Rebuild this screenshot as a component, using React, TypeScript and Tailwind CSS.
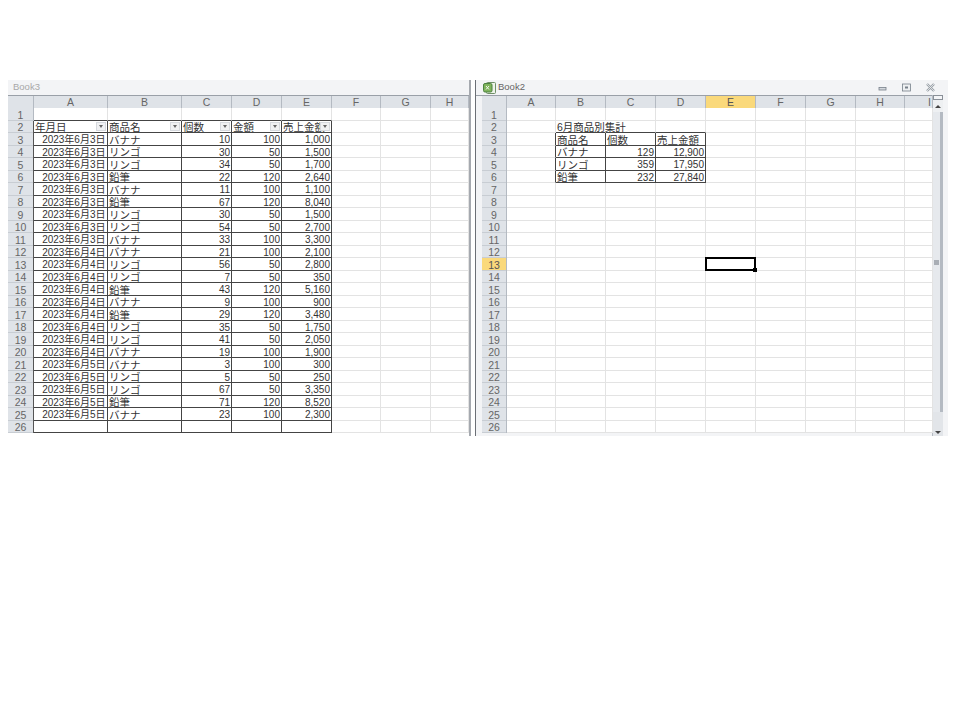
import React from "react";

const rowsLeft: [string, string, string, string, string][] = [
  ["2023年6月3日", "バナナ", "10", "100", "1,000"],
  ["2023年6月3日", "リンゴ", "30", "50", "1,500"],
  ["2023年6月3日", "リンゴ", "34", "50", "1,700"],
  ["2023年6月3日", "鉛筆", "22", "120", "2,640"],
  ["2023年6月3日", "バナナ", "11", "100", "1,100"],
  ["2023年6月3日", "鉛筆", "67", "120", "8,040"],
  ["2023年6月3日", "リンゴ", "30", "50", "1,500"],
  ["2023年6月3日", "リンゴ", "54", "50", "2,700"],
  ["2023年6月3日", "バナナ", "33", "100", "3,300"],
  ["2023年6月4日", "バナナ", "21", "100", "2,100"],
  ["2023年6月4日", "リンゴ", "56", "50", "2,800"],
  ["2023年6月4日", "リンゴ", "7", "50", "350"],
  ["2023年6月4日", "鉛筆", "43", "120", "5,160"],
  ["2023年6月4日", "バナナ", "9", "100", "900"],
  ["2023年6月4日", "鉛筆", "29", "120", "3,480"],
  ["2023年6月4日", "リンゴ", "35", "50", "1,750"],
  ["2023年6月4日", "リンゴ", "41", "50", "2,050"],
  ["2023年6月4日", "バナナ", "19", "100", "1,900"],
  ["2023年6月5日", "バナナ", "3", "100", "300"],
  ["2023年6月5日", "リンゴ", "5", "50", "250"],
  ["2023年6月5日", "リンゴ", "67", "50", "3,350"],
  ["2023年6月5日", "鉛筆", "71", "120", "8,520"],
  ["2023年6月5日", "バナナ", "23", "100", "2,300"],
];

const font = "font-['Liberation_Sans','Noto_Sans_CJK_JP',sans-serif]";
const rowHeights = Array.from({ length: 26 }, (_, i) => (i % 2 === 0 ? "h-[13px]" : "h-[12px]"));

function ColHead({ label, w, active, end }: { label: string; w: string; active?: boolean; end?: boolean }) {
  return (
    <div
      className={`${w} h-[12px] shrink-0 flex items-center border-r border-[#b4bac2] text-[10.5px] leading-none ${
        end ? "justify-end pr-[1px]" : "justify-center"
      } ${active ? "bg-[#fad97b] text-[#555]" : "bg-[#dfe3e8] text-[#666]"}`}
    >
      {label}
    </div>
  );
}

function RowHead({ n, h, w, active }: { n: number; h: string; w: string; active?: boolean }) {
  return (
    <div
      className={`${w} ${h} shrink-0 flex items-center justify-center pt-[2px] border-b border-[#c8cdd3] text-[10.5px] leading-none ${
        active ? "bg-[#fad97b] text-[#555]" : "bg-[#dfe3e8] text-[#666]"
      }`}
    >
      {n}
    </div>
  );
}

type Tone = "grid" | "dark" | "bottom" | "right";

const toneClass: Record<Tone, string> = {
  grid: "border-b border-r border-b-[#e3e3e3] border-r-[#e3e3e3]",
  dark: "border-b border-r border-b-[#444] border-r-[#444]",
  bottom: "border-b border-r border-b-[#444] border-r-[#e3e3e3]",
  right: "border-b border-r border-b-[#e3e3e3] border-r-[#444]",
};

function Cell({
  w,
  h,
  text,
  align,
  tone = "grid",
  filter,
  num,
  date,
  overflow,
}: {
  w: string;
  h: string;
  text?: string;
  align?: "right" | "left";
  tone?: Tone;
  filter?: boolean;
  num?: boolean;
  date?: boolean;
  overflow?: boolean;
}) {
  return (
    <div
      className={`${w} ${h} shrink-0 relative flex items-center whitespace-nowrap bg-white leading-none text-[#333] pl-[1px] pt-[2px] ${
        overflow ? "z-10 border-r-transparent" : "overflow-hidden"
      } ${num || date ? "text-[10px]" : "text-[10.5px]"} ${date ? "pr-[1.5px]" : "pr-[1px]"} ${
        align === "right" ? "justify-end" : "justify-start"
      } ${toneClass[tone]}`}
    >
      {text}
      {filter && (
        <span className="absolute right-[1px] top-[1px] w-[10px] h-[9px] bg-[#f0f1f3] border border-[#d6d9de] flex items-center justify-center">
          <span className="w-0 h-0 border-l-[2.5px] border-r-[2.5px] border-t-[3px] border-l-transparent border-r-transparent border-t-[#666]" />
        </span>
      )}
    </div>
  );
}

function LeftSheet() {
  const widths = ["w-[74px]", "w-[74px]", "w-[50px]", "w-[50px]", "w-[50px]"];
  const extra = ["w-[49px]", "w-[50px]", "w-[38px]"];
  const header = ["年月日", "商品名", "個数", "金額", "売上金額"];
  return (
    <div className="w-[461px] shrink-0">
      <div className="h-[15px] flex items-center bg-[#f3f4f6] pl-[5px] text-[9.5px] text-[#a8a8a8]">Book3</div>
      <div className="flex border-t border-[#9aa0a8]">
        <div className="w-[26px] h-[12px] bg-[#dfe3e8] border-r border-[#b4bac2] shrink-0" />
        {["A", "B", "C", "D", "E", "F", "G", "H"].map((c, i) => (
          <ColHead key={c} label={c} w={[...widths, ...extra][i]} />
        ))}
      </div>
      {rowHeights.map((h, r) => {
        const n = r + 1;
        const d = r >= 2 && r <= 24 ? rowsLeft[r - 2] : null;
        return (
          <div key={n} className="flex">
            <div className={`border-r ${n === 1 ? "border-[#b4bac2]" : "border-[#555]"}`}>
              <RowHead n={n} h={h} w="w-[25px]" />
            </div>
            {widths.map((w, i) => {
              if (n === 1) return <Cell key={i} w={w} h={h} tone="bottom" />;
              if (n === 2) return <Cell key={i} w={w} h={h} text={header[i]} tone="dark" filter />;
              if (n === 26) return <Cell key={i} w={w} h={h} tone="dark" />;
              return (
                <Cell
                  key={i}
                  w={w}
                  h={h}
                  tone="dark"
                  text={d![i]}
                  align={i === 1 ? "left" : "right"}
                  num={i > 1}
                  date={i === 0}
                />
              );
            })}
            {extra.map((w, i) => (
              <Cell key={i} w={w} h={h} />
            ))}
          </div>
        );
      })}
    </div>
  );
}

function ExcelIcon() {
  return (
    <svg width="13" height="12" viewBox="0 0 13 12" className="shrink-0">
      <rect x="3.5" y="0.5" width="9" height="11" rx="1" fill="#eef3ea" stroke="#6f8f68" />
      <rect x="0.5" y="1.5" width="8.5" height="8.5" rx="1.5" fill="#7fb35c" stroke="#4d8240" />
      <path d="M3 4l3 3.5M6 4L3 7.5" stroke="#f4f8ee" strokeWidth="1" fill="none" />
    </svg>
  );
}

function RightSheet() {
  const widths = ["w-[49px]", "w-[50px]", "w-[50px]", "w-[50px]", "w-[50px]", "w-[50px]", "w-[50px]", "w-[49px]", "w-[28px]"];
  const cols = ["A", "B", "C", "D", "E", "F", "G", "H", "I"];
  const table: Record<number, [string, string, string]> = {
    3: ["商品名", "個数", "売上金額"],
    4: ["バナナ", "129", "12,900"],
    5: ["リンゴ", "359", "17,950"],
    6: ["鉛筆", "232", "27,840"],
  };
  return (
    <div className="w-[472px] shrink-0 bg-[#f3f4f6]">
      <div className="h-[15px] flex items-center pl-[7px] pr-[13px] gap-[2px]">
        <ExcelIcon />
        <span className="text-[9.5px] text-[#666]">Book2</span>
        <div className="ml-auto flex items-center gap-[15px]">
          <svg width="9" height="9" viewBox="0 0 9 9">
            <rect x="1" y="4.5" width="7" height="2.5" fill="#d4d8dd" stroke="#77808a" strokeWidth="0.8" />
          </svg>
          <svg width="9" height="9" viewBox="0 0 9 9">
            <rect x="0.5" y="1" width="8" height="7" fill="#eef0f2" stroke="#77808a" strokeWidth="0.8" />
            <rect x="3" y="3.5" width="3" height="2" fill="#77808a" />
          </svg>
          <svg width="9" height="9" viewBox="0 0 9 9">
            <path d="M1 1l7 7M8 1l-7 7" stroke="#9aa1a8" strokeWidth="2.4" fill="none" />
            <path d="M1 1l7 7M8 1l-7 7" stroke="#eceef0" strokeWidth="0.8" fill="none" />
          </svg>
        </div>
      </div>
      <div className="flex h-[341px] items-start">
        <div className="w-[456px] shrink-0">
          <div className="flex border-t border-[#9aa0a8] pl-[6px]">
            <div className="w-[25px] h-[12px] bg-[#dfe3e8] border-r border-[#b4bac2] shrink-0" />
            {cols.map((c, i) => (
              <ColHead key={c} label={c} w={widths[i]} active={c === "E"} end={c === "I"} />
            ))}
          </div>
          {rowHeights.map((h, r) => {
            const n = r + 1;
            return (
              <div key={n} className="flex pl-[6px]">
                <div className="border-r border-[#b4bac2]">
                  <RowHead n={n} h={h} w="w-[24px]" active={n === 13} />
                </div>
                {widths.map((w, i) => {
                  if (n === 2 && i === 1)
                    return <Cell key={i} w={w} h={h} tone="bottom" text="6月商品別集計" overflow />;
                  if (n === 2 && (i === 2 || i === 3)) return <Cell key={i} w={w} h={h} tone="bottom" />;
                  if (table[n] && i === 0) return <Cell key={i} w={w} h={h} tone="right" />;
                  if (table[n] && i >= 1 && i <= 3)
                    return (
                      <Cell
                        key={i}
                        w={w}
                        h={h}
                        tone="dark"
                        text={table[n][i - 1]}
                        align={n === 3 || i === 1 ? "left" : "right"}
                        num={n !== 3 && i > 1}
                      />
                    );
                  if (n === 13 && i === 4)
                    return (
                      <div key={i} className="relative shrink-0">
                        <Cell w={w} h={h} />
                        <div className="absolute -left-[1px] -top-[1px] right-0 bottom-0 z-10 border-2 border-black" />
                        <span className="absolute -right-[1px] -bottom-[1px] z-20 w-[4px] h-[4px] bg-black" />
                      </div>
                    );
                  return <Cell key={i} w={w} h={h} />;
                })}
              </div>
            );
          })}
        </div>
        <div className="w-[11px] h-full shrink-0 flex flex-col bg-[#e4e7eb] border-l border-[#b4bac2]">
          <div className="h-[5px] border border-[#8a9098] bg-[#f4f5f7] shrink-0" />
          <div className="h-[12px] shrink-0 flex items-center justify-center bg-[#eef0f2]">
            <span className="w-0 h-0 border-l-[3px] border-r-[3px] border-b-[3px] border-l-transparent border-r-transparent border-b-[#444]" />
          </div>
          <div className="flex-1 flex items-center justify-center bg-[#e6e9ed] border-r-[3px] border-[#b4bac2]">
            <span className="w-[5px] h-[5px] bg-[#a9aeb5]" />
          </div>
          <div className="h-[24px] shrink-0 flex items-end justify-center pb-[2px] bg-[#e2e5e9]">
            <span className="w-0 h-0 border-l-[3px] border-r-[3px] border-t-[3px] border-l-transparent border-r-transparent border-t-[#444]" />
          </div>
        </div>
      </div>
    </div>
  );
}

export default function App() {
  return (
    <div className={`w-[960px] h-[720px] bg-white overflow-hidden pt-[80px] pl-[8px] ${font}`}>
      <div className="flex items-start">
        <LeftSheet />
        <div className="w-[7px] h-[356px] shrink-0 bg-white border-l-2 border-r border-l-[#a5a9af] border-r-[#6b6f75]" />
        <RightSheet />
      </div>
    </div>
  );
}
